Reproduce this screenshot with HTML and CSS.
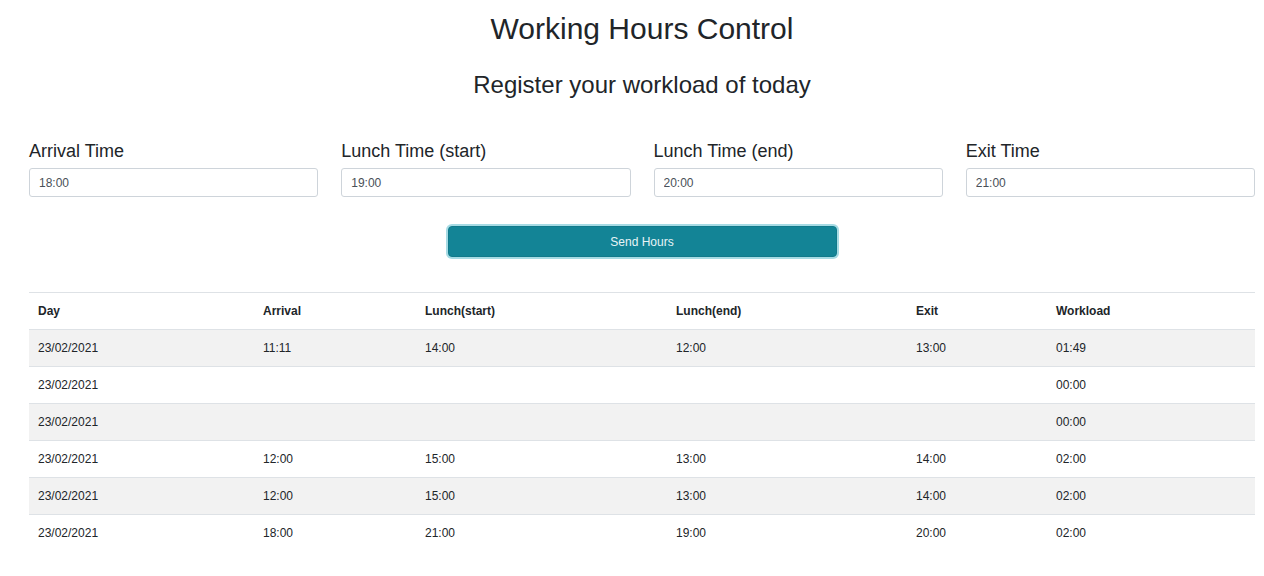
FILE: index.html
```html
<!DOCTYPE html>
<html lang="en">
<head>
<meta charset="utf-8">
<title>Working Hours Control</title>
<link rel="stylesheet" href="styles.css">
</head>
<body>
<main class="container">
  <h1 class="title">Working Hours Control</h1>
  <h2 class="subtitle">Register your workload of today</h2>
  <form class="form">
    <div class="fields">
      <div class="field">
        <label class="label">Arrival Time</label>
        <input class="input" type="text" value="18:00">
      </div>
      <div class="field">
        <label class="label">Lunch Time (start)</label>
        <input class="input" type="text" value="19:00">
      </div>
      <div class="field">
        <label class="label">Lunch Time (end)</label>
        <input class="input" type="text" value="20:00">
      </div>
      <div class="field">
        <label class="label">Exit Time</label>
        <input class="input" type="text" value="21:00">
      </div>
    </div>
    <div class="actions">
      <button class="btn" type="button">Send Hours</button>
    </div>
  </form>
  <table class="table">
    <colgroup>
      <col class="c1"><col class="c2"><col class="c3"><col class="c4"><col class="c5"><col class="c6">
    </colgroup>
    <thead>
      <tr><th>Day</th><th>Arrival</th><th>Lunch(start)</th><th>Lunch(end)</th><th>Exit</th><th>Workload</th></tr>
    </thead>
    <tbody>
      <tr><td>23/02/2021</td><td>11:11</td><td>14:00</td><td>12:00</td><td>13:00</td><td>01:49</td></tr>
      <tr><td>23/02/2021</td><td></td><td></td><td></td><td></td><td>00:00</td></tr>
      <tr><td>23/02/2021</td><td></td><td></td><td></td><td></td><td>00:00</td></tr>
      <tr><td>23/02/2021</td><td>12:00</td><td>15:00</td><td>13:00</td><td>14:00</td><td>02:00</td></tr>
      <tr><td>23/02/2021</td><td>12:00</td><td>15:00</td><td>13:00</td><td>14:00</td><td>02:00</td></tr>
      <tr><td>23/02/2021</td><td>18:00</td><td>21:00</td><td>19:00</td><td>20:00</td><td>02:00</td></tr>
    </tbody>
  </table>
</main>
</body>
</html>
```

FILE: styles.css
```css
* { box-sizing: border-box; }
html, body { margin: 0; padding: 0; background: #fff; }
body {
  font-family: "Liberation Sans", Arial, sans-serif;
  color: #212529;
}
.container {
  padding: 0 9px 0 29px;
}
.title {
  margin: 0;
  padding-top: 11px;
  font-size: 30px;
  font-weight: 400;
  line-height: 36px;
  text-align: center;
}
.subtitle {
  margin: 0;
  padding-top: 24px;
  font-size: 24px;
  font-weight: 400;
  line-height: 28px;
  text-align: center;
}
.form { margin-top: 41px; }
.fields {
  display: grid;
  grid-template-columns: repeat(4, 1fr);
  column-gap: 23px;
}
.field { display: flex; flex-direction: column; }
.label {
  font-size: 18px;
  line-height: 22px;
  margin-bottom: 6px;
}
.input {
  height: 29px;
  border: 1px solid #ced4da;
  border-radius: 3px;
  padding: 0 9px;
  font-family: "Liberation Sans", Arial, sans-serif;
  font-size: 12px;
  color: #495057;
  background: #fff;
}
.actions {
  display: flex;
  justify-content: center;
  margin-top: 29px;
}
.btn {
  width: 389px;
  height: 31px;
  background: #138496;
  border: 1px solid #117a8b;
  border-radius: 4px;
  color: #e8f4f6;
  font-family: "Liberation Sans", Arial, sans-serif;
  font-size: 12px;
  box-shadow: 0 0 0 2px rgba(58, 176, 195, 0.45);
}
.table {
  margin-top: 35px;
  width: 100%;
  border-collapse: collapse;
  font-size: 12px;
}
.c1 { width: 225px; }
.c2 { width: 162px; }
.c3 { width: 251px; }
.c4 { width: 240px; }
.c5 { width: 140px; }
.c6 { width: 208px; }
.table th, .table td {
  text-align: left;
  padding: 0 9px;
  height: 37px;
  border-top: 1px solid #dee2e6;
  vertical-align: middle;
}
.table th { font-weight: 700; }
.table thead th { border-bottom: 1px solid #dee2e6; }
.table tbody tr:nth-child(odd) { background: #f2f2f2; }
```
